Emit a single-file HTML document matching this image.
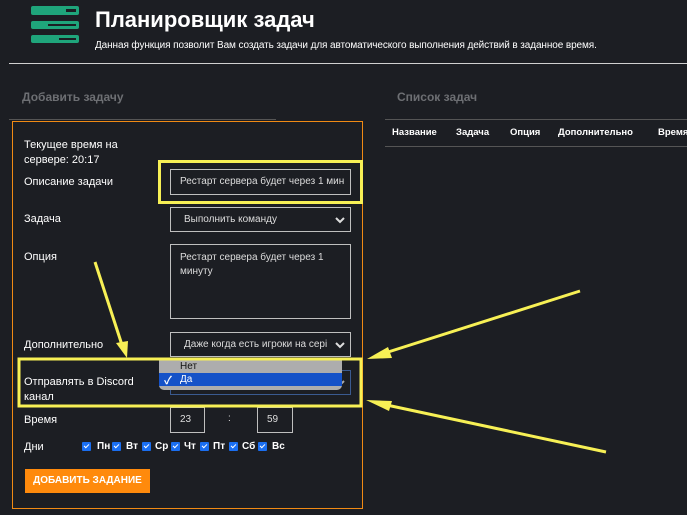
<!DOCTYPE html>
<html><head><meta charset="utf-8"><style>
*{margin:0;padding:0;box-sizing:border-box}
body{width:687px;height:515px;background:#1c1e23;font-family:"Liberation Sans","Noto Sans CJK SC",sans-serif;color:#fff;position:relative;overflow:hidden}
.a{position:absolute;white-space:nowrap}
.lb{font-size:11px;color:#fff}
.in{position:absolute;border:1px solid #bfbfbf;font-size:10px;color:#ddd;padding-left:9px;line-height:23px}
.chev{position:absolute;right:4px;top:5px}
.cb{position:absolute;width:9px;height:9px;background:#1a6ef0;border-radius:1px}
.cb:after{content:"";position:absolute;left:3px;top:1px;width:2px;height:4px;border:solid #fff;border-width:0 1.3px 1.3px 0;transform:rotate(45deg)}
.dl{position:absolute;font-size:10px;font-weight:bold;color:#fff}
</style></head><body>
<div class="a" style="left:31px;top:6px;width:48px;height:9px;background:#1fa57b;border-radius:2px"></div>
<div class="a" style="left:66px;top:9px;width:10px;height:3px;background:#1c1e23"></div>
<div class="a" style="left:31px;top:21px;width:48px;height:8px;background:#1fa57b;border-radius:2px"></div>
<div class="a" style="left:48px;top:24px;width:28px;height:2px;background:#1c1e23"></div>
<div class="a" style="left:31px;top:35px;width:48px;height:8px;background:#1fa57b;border-radius:2px"></div>
<div class="a" style="left:59px;top:38px;width:17px;height:2px;background:#1c1e23"></div>
<div class="a" style="left:95px;top:7px;font-size:22px;font-weight:bold">Планировщик задач</div>
<div class="a" style="left:95px;top:40px;font-size:10px;letter-spacing:-0.1px">Данная функция позволит Вам создать задачи для автоматического выполнения действий в заданное время.</div>
<div class="a" style="left:9px;top:63px;width:678px;height:1px;background:#d0d0d0"></div>
<div class="a" style="left:22px;top:90px;font-size:12px;font-weight:bold;color:#6d6f73">Добавить задачу</div>
<div class="a" style="left:397px;top:90px;font-size:12px;font-weight:bold;color:#6d6f73">Список задач</div>
<div class="a" style="left:9px;top:119px;width:267px;height:1px;background:#555"></div>
<div class="a" style="left:12px;top:121px;width:351px;height:388px;border:1px solid #f08a14"></div>
<div class="a" style="left:385px;top:119px;width:302px;height:1px;background:#555"></div>
<div class="a" style="left:385px;top:146px;width:302px;height:1px;background:#555"></div>
<div class="a" style="left:392px;top:127px;font-size:9.5px;font-weight:bold">Название</div>
<div class="a" style="left:456px;top:127px;font-size:9.5px;font-weight:bold">Задача</div>
<div class="a" style="left:510px;top:127px;font-size:9.5px;font-weight:bold">Опция</div>
<div class="a" style="left:558px;top:127px;font-size:9.5px;font-weight:bold">Дополнительно</div>
<div class="a" style="left:658px;top:127px;font-size:9.5px;font-weight:bold">Время</div>

<div class="a lb" style="left:24px;top:139px">Текущее время на</div>
<div class="a lb" style="left:24px;top:154px">сервере: 20:17</div>
<div class="a lb" style="left:24px;top:176px">Описание задачи</div>
<div class="a lb" style="left:24px;top:213px">Задача</div>
<div class="a lb" style="left:24px;top:251px">Опция</div>
<div class="a lb" style="left:24px;top:339px">Дополнительно</div>
<div class="a lb" style="left:24px;top:376px">Отправлять в Discord</div>
<div class="a lb" style="left:24px;top:391px">канал</div>
<div class="a lb" style="left:24px;top:414px">Время</div>
<div class="a lb" style="left:24px;top:441px">Дни</div>

<div class="in" style="left:170px;top:169px;width:181px;height:26px;line-height:24px">Рестарт сервера будет через 1 мин</div>
<div class="in" style="left:170px;top:207px;width:181px;height:25px;padding-left:13px">Выполнить команду<svg class="chev" width="12" height="14" viewBox="0 0 12 14"><path d="M2 5l4 4 4-4" stroke="#ddd" stroke-width="2" fill="none"/></svg></div>
<div class="in" style="left:170px;top:244px;width:181px;height:75px;line-height:14px;padding-top:6px;white-space:normal">Рестарт сервера будет через 1 минуту</div>
<div class="in" style="left:170px;top:332px;width:181px;height:25px;padding-left:13px;overflow:hidden">Даже когда есть игроки на сері<svg class="chev" width="12" height="14" viewBox="0 0 12 14" style="background:#1c1e23"><path d="M2 5l4 4 4-4" stroke="#ddd" stroke-width="2" fill="none"/></svg></div>
<div class="in" style="left:170px;top:370px;width:181px;height:25px;border-color:#3a5a90"><svg class="chev" width="12" height="14" viewBox="0 0 12 14"><path d="M2 5l4 4 4-4" stroke="#aaa" stroke-width="2" fill="none"/></svg></div>
<div class="a" style="left:159px;top:358px;width:183px;height:32px;background:#adadad;border-radius:0 0 5px 5px"></div>
<div class="a" style="left:180px;top:361px;font-size:10px;color:#111">Нет</div>
<div class="a" style="left:159px;top:373px;width:183px;height:13px;background:#1552c8"></div>
<div class="a" style="left:164px;top:372px;font-size:11px;color:#fff;font-weight:bold">✓</div>
<div class="a" style="left:180px;top:374px;font-size:10px;color:#fff">Да</div>

<div class="in" style="left:170px;top:407px;width:35px;height:26px;line-height:24px">23</div>
<div class="a" style="left:228px;top:413px;font-size:10px;color:#ddd">:</div>
<div class="in" style="left:257px;top:407px;width:36px;height:26px;line-height:24px">59</div>

<div class="cb" style="left:82px;top:442px"></div><div class="dl" style="left:97px;top:441px">Пн</div>
<div class="cb" style="left:112px;top:442px"></div><div class="dl" style="left:126px;top:441px">Вт</div>
<div class="cb" style="left:142px;top:442px"></div><div class="dl" style="left:155px;top:441px">Ср</div>
<div class="cb" style="left:171px;top:442px"></div><div class="dl" style="left:184px;top:441px">Чт</div>
<div class="cb" style="left:200px;top:442px"></div><div class="dl" style="left:213px;top:441px">Пт</div>
<div class="cb" style="left:229px;top:442px"></div><div class="dl" style="left:242px;top:441px">Сб</div>
<div class="cb" style="left:258px;top:442px"></div><div class="dl" style="left:272px;top:441px">Вс</div>

<div class="a" style="left:25px;top:469px;width:125px;height:24px;background:#ff8a0c;font-size:10px;font-weight:bold;line-height:24px;text-align:center">ДОБАВИТЬ ЗАДАНИЕ</div>

<svg class="a" style="left:0;top:0" width="687" height="515">
<g stroke="#f7f055" fill="none">
<rect x="159.5" y="161.5" width="202" height="41" stroke-width="3"/>
<rect x="19" y="359" width="342" height="47" stroke-width="3"/>
<path d="M95 262L122 345M580 291L385 353M606 452L382 404" stroke-width="3"/>
</g>
<g fill="#f7f055">
<path d="M127 358L116 343L128 341Z"/>
<path d="M367 359L388 347L392 358Z"/>
<path d="M366 400L392 401L389 411Z"/>
</g>
</svg>
</body></html>
